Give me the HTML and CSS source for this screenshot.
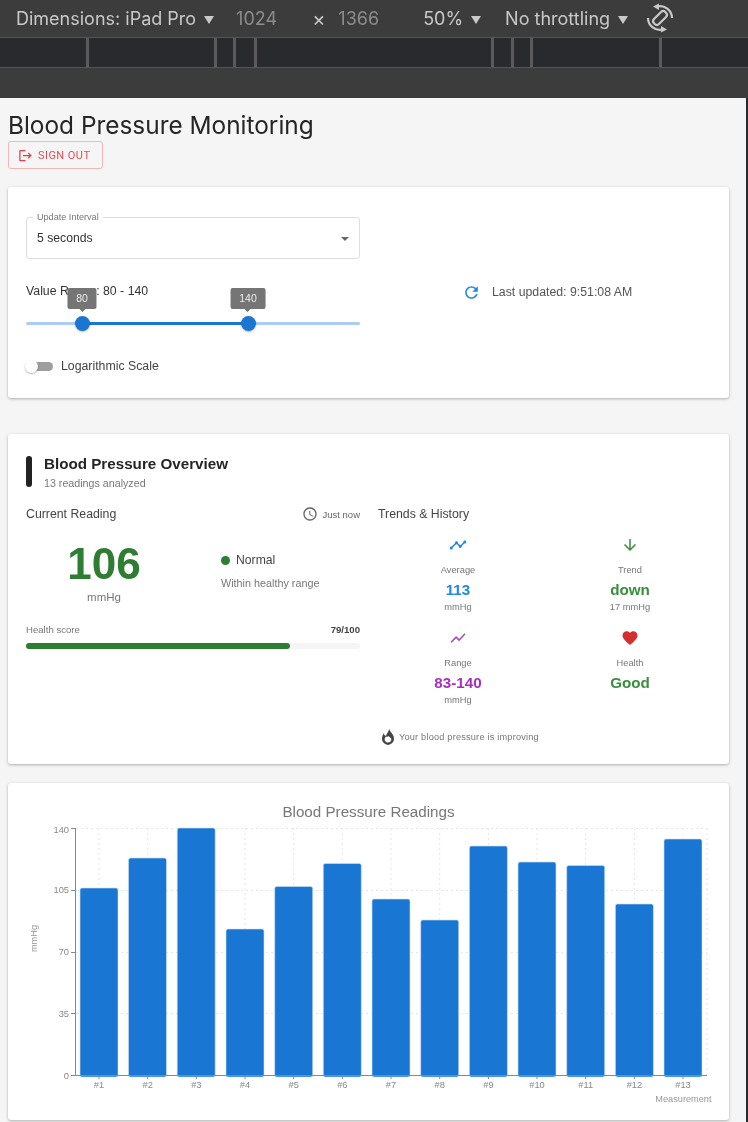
FILE: index.html
```html
<!DOCTYPE html>
<html lang="en">
<head>
    <meta charset="UTF-8">
    <meta name="viewport" content="width=device-width, initial-scale=1.0">
    <title>Blood Pressure Monitoring</title>
    <link rel="stylesheet" href="styles.css">
</head>
<body>
    <!-- device toolbar -->
    <div class="toolbar">
        <span class="tool-item dims">Dimensions: iPad Pro</span><i class="caret"></i>
        <span class="tool-num first-num">1024</span>
        <span class="tool-x">×</span>
        <span class="tool-num">1366</span>
        <span class="tool-item zoom">50%</span><i class="caret"></i>
        <span class="tool-item throttle">No throttling</span><i class="caret"></i>
        <svg class="rotate" viewBox="0 0 30 30">
            <rect x="11.500" y="7" width="7" height="16" rx="3" transform="rotate(45 15 15)"/>
            <path d="M12 3.500A12 12 0 0 1 27 15M18 26.500A12 12 0 0 1 3 15"/>
            <path class="rotate-head" d="M8 3.500L14 .5V7zM22 26.500L16 29.500V23z"/>
        </svg>
    </div>
    <div class="ruler">
        <i class="tick t1"></i><i class="tick t2"></i><i class="tick t3"></i><i class="tick t4"></i>
        <i class="tick t5"></i><i class="tick t6"></i><i class="tick t7"></i><i class="tick t8"></i>
    </div>
    <div class="band"></div>

    <div class="page">
        <h1>Blood Pressure Monitoring</h1>
        <button class="signout" type="button">
            <svg viewBox="0 0 24 24"><path d="M17 7l-1.41 1.41L18.17 11H8v2h10.17l-2.58 2.58L17 17l5-5zM4 5h8V3H4c-1.1 0-2 .9-2 2v14c0 1.1.9 2 2 2h8v-2H4V5z"/></svg>
            SIGN OUT
        </button>

        <!-- controls -->
        <section class="card controls">
            <div class="controls-left">
                <div class="select">
                    <span class="select-label">Update Interval</span>
                    <span>5 seconds</span>
                    <i class="select-caret"></i>
                </div>
                <div class="range">
                    <div class="range-label">Value Range: 80 - 140</div>
                    <div class="slider">
                        <div class="slider-active"></div>
                        <div class="thumb thumb-low"><span class="tip">80</span></div>
                        <div class="thumb thumb-high"><span class="tip">140</span></div>
                    </div>
                </div>
                <div class="log-row">
                    <div class="switch"><i></i></div>
                    <span>Logarithmic Scale</span>
                </div>
            </div>
            <div class="controls-right">
                <svg class="refresh" viewBox="0 0 24 24"><path d="M17.65 6.35C16.2 4.9 14.21 4 12 4c-4.42 0-7.99 3.58-7.99 8s3.57 8 7.99 8c3.73 0 6.84-2.55 7.73-6h-2.08c-.82 2.33-3.04 4-5.65 4-3.31 0-6-2.69-6-6s2.69-6 6-6c1.66 0 3.14.69 4.22 1.78L13 11h7V4l-2.35 2.35z"/></svg>
                <span>Last updated: 9:51:08 AM</span>
            </div>
        </section>

        <!-- overview -->
        <section class="card overview">
            <div class="ov-head">
                <i class="ov-mark"></i>
                <div>
                    <h2>Blood Pressure Overview</h2>
                    <p>13 readings analyzed</p>
                </div>
            </div>
            <div class="ov-cols">
                <div>
                    <div class="col-head">
                        <span>Current Reading</span>
                        <span class="now">
                            <svg viewBox="0 0 24 24"><path d="M11.99 2C6.47 2 2 6.48 2 12s4.47 10 9.99 10C17.52 22 22 17.52 22 12S17.52 2 11.99 2zM12 20c-4.42 0-8-3.58-8-8s3.58-8 8-8 8 3.58 8 8-3.58 8-8 8zm.5-13H11v6l5.25 3.15.75-1.23-4.5-2.67z"/></svg>
                            Just now
                        </span>
                    </div>
                    <div class="current">
                        <div class="current-val">
                            <div class="big">106</div>
                            <div class="big-unit">mmHg</div>
                        </div>
                        <div class="current-state">
                            <div class="state"><i></i>Normal</div>
                            <div class="state-note">Within healthy range</div>
                        </div>
                    </div>
                    <div class="score-row">
                        <span>Health score</span>
                        <b>79/100</b>
                    </div>
                    <div class="score-bar"><div class="score-fill"></div></div>
                </div>
                <div>
                    <div class="col-head">
                        <span>Trends &amp; History</span>
                    </div>
                    <div class="stats">
                        <div class="stat">
                            <svg class="blue" viewBox="0 0 24 24"><path d="M23 8c0 1.1-.9 2-2 2-.18 0-.35-.02-.51-.07l-3.56 3.55c.05.16.07.34.07.52 0 1.1-.9 2-2 2s-2-.9-2-2c0-.18.02-.36.07-.52l-2.55-2.55c-.16.05-.34.07-.52.07s-.36-.02-.52-.07l-4.55 4.56c.05.16.07.33.07.51 0 1.1-.9 2-2 2s-2-.9-2-2 .9-2 2-2c.18 0 .35.02.51.07l4.56-4.55C8.02 9.36 8 9.18 8 9c0-1.1.9-2 2-2s2 .9 2 2c0 .18-.02.36-.07.52l2.55 2.55c.16-.05.34-.07.52-.07s.36.02.52.07l3.55-3.56C19.02 8.35 19 8.18 19 8c0-1.1.9-2 2-2s2 .9 2 2z"/></svg>
                            <div class="stat-label">Average</div>
                            <div class="stat-val blue">113</div>
                            <div class="stat-unit">mmHg</div>
                        </div>
                        <div class="stat">
                            <svg class="green" viewBox="0 0 24 24"><path d="M20 12l-1.41-1.41L13 16.17V4h-2v12.17l-5.58-5.59L4 12l8 8 8-8z"/></svg>
                            <div class="stat-label">Trend</div>
                            <div class="stat-val green">down</div>
                            <div class="stat-unit">17 mmHg</div>
                        </div>
                        <div class="stat">
                            <svg class="purple" viewBox="0 0 24 24"><path d="M3.5 18.49l6-6.01 4 4L22 6.92l-1.41-1.41-7.09 7.97-4-4L2 16.99z"/></svg>
                            <div class="stat-label">Range</div>
                            <div class="stat-val purple">83-140</div>
                            <div class="stat-unit">mmHg</div>
                        </div>
                        <div class="stat">
                            <svg class="red" viewBox="0 0 24 24"><path d="M12 21.35l-1.45-1.32C5.4 15.36 2 12.28 2 8.5 2 5.42 4.42 3 7.5 3c1.74 0 3.41.81 4.5 2.09C13.09 3.81 14.76 3 16.5 3 19.58 3 22 5.42 22 8.5c0 3.78-3.4 6.86-8.55 11.54L12 21.35z"/></svg>
                            <div class="stat-label">Health</div>
                            <div class="stat-val green">Good</div>
                        </div>
                    </div>
                    <div class="improving">
                        <svg viewBox="0 0 24 24"><path fill-rule="evenodd" d="M13.500 1c.5 4 6.500 6.500 6.500 13.500a8 8 0 0 1-16 0c0-3 1-5.500 2.500-7.500.3 2 1.200 3 2.500 3.500 1.500-3 4-6 4.500-9.500zM12 10.500c-.5 1.500-2 1.500-3 1-1 1-1.500 2.200-1.500 3.200a4.500 4.500 0 0 0 9 0c0-1.700-2.500-3-4.500-4.200z"/></svg>
                        Your blood pressure is improving
                    </div>
                </div>
            </div>
        </section>

        <!-- chart -->
        <section class="card chart-card">
            <svg class="chart" width="721" height="337" viewBox="8 783 721 337">
                <text class="chart-title" x="368.500" y="817" text-anchor="middle">Blood Pressure Readings</text>

                <g class="grid">
                    <path d="M76 828.500H707M76 890.500H707M76 952.500H707M76 1013.500H707"/>
                    <path d="M99 828V1076M147.700 828V1076M196.300 828V1076M245 828V1076M293.700 828V1076M342.300 828V1076M391 828V1076M439.700 828V1076M488.400 828V1076M537 828V1076M585.700 828V1076M634.400 828V1076M683 828V1076M707 828V1076"/>
                </g>

                <g class="bars">
                    <rect x="80" y="888" width="38" height="189" rx="2"/>
                    <rect x="128.500" y="858" width="38" height="219" rx="2"/>
                    <rect x="177.200" y="828" width="38" height="249" rx="2"/>
                    <rect x="226" y="929" width="38" height="148" rx="2"/>
                    <rect x="274.700" y="886.500" width="38" height="190.500" rx="2"/>
                    <rect x="323.300" y="863.500" width="38" height="213.500" rx="2"/>
                    <rect x="372" y="899" width="38" height="178" rx="2"/>
                    <rect x="420.700" y="920" width="38" height="157" rx="2"/>
                    <rect x="469.400" y="846" width="38" height="231" rx="2"/>
                    <rect x="518" y="862" width="38" height="215" rx="2"/>
                    <rect x="566.700" y="865.500" width="38" height="211.500" rx="2"/>
                    <rect x="615.400" y="904" width="38" height="173" rx="2"/>
                    <rect x="664" y="839" width="38" height="238" rx="2"/>
                </g>

                <g class="axis">
                    <path d="M75.500 828V1076M71 828.500H76M71 890.500H76M71 952.500H76M71 1013.500H76M71 1075.500H707M99 1076V1079M147.700 1076V1079M196.300 1076V1079M245 1076V1079M293.700 1076V1079M342.300 1076V1079M391 1076V1079M439.700 1076V1079M488.400 1076V1079M537 1076V1079M585.700 1076V1079M634.400 1076V1079M683 1076V1079"/>
                </g>

                <g class="tick-text" text-anchor="end">
                    <text x="69" y="833">140</text>
                    <text x="69" y="893">105</text>
                    <text x="69" y="955">70</text>
                    <text x="69" y="1017">35</text>
                    <text x="69" y="1079">0</text>
                </g>
                <g class="tick-text" text-anchor="middle">
                    <text x="99" y="1088">#1</text>
                    <text x="147.700" y="1088">#2</text>
                    <text x="196.300" y="1088">#3</text>
                    <text x="245" y="1088">#4</text>
                    <text x="293.700" y="1088">#5</text>
                    <text x="342.300" y="1088">#6</text>
                    <text x="391" y="1088">#7</text>
                    <text x="439.700" y="1088">#8</text>
                    <text x="488.400" y="1088">#9</text>
                    <text x="537" y="1088">#10</text>
                    <text x="585.700" y="1088">#11</text>
                    <text x="634.400" y="1088">#12</text>
                    <text x="683" y="1088">#13</text>
                </g>
                <text class="axis-name" x="711.500" y="1102" text-anchor="end">Measurement</text>
                <text class="axis-name" x="37" y="938.500" text-anchor="middle" transform="rotate(-90 37 938.500)">mmHg</text>
            </svg>
        </section>
    </div>
</body>
</html>
```
FILE: styles.css
```css
*{
    margin: 0;
    padding: 0;
    box-sizing: border-box;
}
html, body{
    height: 1122px;
    overflow: hidden;
}
body{
    background: #292a2d;
    font-family: "Liberation Sans", Arial, sans-serif;
    color: #333;
}

/* devtools bars */
.toolbar{
    height: 38px;
    background: #3c3c3c;
    border-bottom: 1px solid #555;
    display: flex;
    align-items: center;
    font-family: Inter, sans-serif;
    font-size: 18px;
    color: #c9c9c9;
    filter: blur(.5px);
}
.tool-item, .tool-num, .tool-x{
    white-space: nowrap;
}
.dims{
    margin-left: 16px;
}
.caret{
    width: 0;
    height: 0;
    margin-left: 8px;
    margin-top: 2px;
    border-left: 5.500px solid transparent;
    border-right: 5.500px solid transparent;
    border-top: 8px solid #c9c9c9;
}
.tool-num{
    color: #8c8c8c;
}
.first-num{
    margin-left: 22px;
}
.tool-x{
    margin: 0 13px 0 35px;
    font-size: 20px;
}
.zoom{
    margin-left: 44px;
}
.throttle{
    margin-left: 24px;
}
.rotate{
    width: 30px;
    height: 30px;
    margin-left: 17px;
    margin-top: -1px;
    fill: none;
    stroke: #c9c9c9;
    stroke-width: 2.2;
}
.rotate-head{
    fill: #c9c9c9;
    stroke: none;
}
.ruler{
    height: 30px;
    background: #292a2d;
    border-bottom: 1px solid #555;
    display: flex;
}
.tick{
    width: 3px;
    background: #5a5a5a;
}
.t1{ margin-left: 86px; }
.t2{ margin-left: 125px; }
.t3{ margin-left: 16px; }
.t4{ margin-left: 18px; }
.t5{ margin-left: 234px; }
.t6{ margin-left: 17px; }
.t7{ margin-left: 16px; }
.t8{ margin-left: 126px; }
.band{
    height: 30px;
    background: #3c3c3c;
}

/* page */
.page{
    width: 746px;
    height: 1024px;
    background: #f5f5f5;
    padding: 12px 17px 0 8px;
    filter: blur(.6px);
}
h1{
    font-family: Inter, sans-serif;
    font-size: 24.400px;
    font-weight: 400;
    line-height: 31px;
    color: #252525;
}
.signout{
    display: flex;
    align-items: center;
    gap: 5px;
    width: 95px;
    height: 28px;
    padding-left: 9px;
    background: none;
    border: 1px solid #f2b8b8;
    border-radius: 3px;
    font-family: Roboto, sans-serif;
    font-size: 11px;
    letter-spacing: .45px;
    color: #e04f5a;
}
.signout svg{
    width: 15px;
    height: 15px;
    fill: #e0404a;
}
.card{
    background: #fff;
    border-radius: 3px;
    box-shadow: 0 1px 3px rgba(0,0,0,.3);
}

/* controls card */
.controls{
    height: 211px;
    margin-top: 18px;
    padding: 30px 18px 0;
    display: grid;
    grid-template-columns: 334px 1fr;
}
.select{
    position: relative;
    height: 42px;
    padding: 0 10px;
    display: flex;
    align-items: center;
    border: 1px solid #ddd;
    border-radius: 3px;
    font-size: 12.200px;
    color: #333;
}
.select-label{
    position: absolute;
    left: 6px;
    top: -6px;
    padding: 0 4px;
    background: #fff;
    font-size: 9.100px;
    line-height: 10px;
    color: #777;
}
.select-caret{
    position: absolute;
    right: 10px;
    top: 19px;
    border-left: 4px solid transparent;
    border-right: 4px solid transparent;
    border-top: 4px solid #666;
}
.range{
    margin-top: 25px;
}
.range-label{
    font-size: 12.300px;
    line-height: 14px;
    color: #333;
}
.slider{
    position: relative;
    height: 3px;
    margin-top: 24px;
    border-radius: 2px;
    background: #a9cdf3;
}
.slider-active{
    position: absolute;
    left: 56px;
    width: 166px;
    height: 3px;
    background: #1976d2;
}
.thumb{
    position: absolute;
    top: -6px;
    width: 15px;
    height: 15px;
    border-radius: 50%;
    background: #1976d2;
    box-shadow: 0 1px 2px rgba(0,0,0,.25);
}
.thumb-low{ left: 48.500px; }
.thumb-high{ left: 214.500px; }
.tip{
    position: absolute;
    left: 50%;
    bottom: 22px;
    transform: translateX(-50%);
    height: 21px;
    padding: 0 8.700px;
    display: block;
    text-align: center;
    line-height: 20px;
    font-size: 10.500px;
    color: #eee;
    background: #757575;
    border-radius: 2px;
}
.tip::after{
    content: "";
    position: absolute;
    left: 50%;
    bottom: -3px;
    margin-left: -3px;
    border-left: 3px solid transparent;
    border-right: 3px solid transparent;
    border-top: 3px solid #757575;
}
.log-row{
    margin-top: 34px;
    display: flex;
    align-items: center;
    gap: 8px;
    font-size: 12.300px;
    color: #444;
}
.switch{
    position: relative;
    width: 26px;
    height: 9px;
    margin-left: 1px;
    border-radius: 5px;
    background: #9e9e9e;
}
.switch i{
    position: absolute;
    left: -2px;
    top: -2px;
    width: 13px;
    height: 13px;
    border-radius: 50%;
    background: #fff;
    box-shadow: 0 1px 2px rgba(0,0,0,.3);
}
.controls-right{
    height: 20px;
    margin-top: 65px;
    padding-left: 102px;
    display: flex;
    align-items: center;
    gap: 11px;
    font-size: 12.300px;
    color: #555;
}
.refresh{
    width: 19px;
    height: 19px;
    fill: #1e88e5;
}

/* overview card */
.overview{
    height: 330px;
    margin-top: 36px;
    padding: 22px 18px 0;
}
.ov-head{
    display: flex;
    gap: 12px;
}
.ov-mark{
    width: 6px;
    height: 31px;
    border-radius: 3px;
    background: #222;
}
h2{
    font-size: 15.200px;
    line-height: 15px;
    color: #252525;
}
.ov-head p{
    margin-top: 6px;
    font-size: 10.700px;
    line-height: 12px;
    color: #777;
}
.ov-cols{
    display: grid;
    grid-template-columns: 334px 334px;
    gap: 18px;
    margin-top: 18px;
}
.col-head{
    display: flex;
    justify-content: space-between;
    align-items: center;
    height: 14px;
    font-size: 12.300px;
    color: #444;
}
.now{
    display: flex;
    align-items: center;
    gap: 5px;
    font-size: 9.500px;
    color: #666;
}
.now svg{
    width: 16px;
    height: 16px;
    fill: #666;
}
.current{
    display: grid;
    grid-template-columns: 156px 1fr;
    column-gap: 39px;
    margin-top: 18px;
}
.current-val{
    text-align: center;
}
.big{
    font-size: 44px;
    font-weight: 700;
    line-height: 50px;
    color: #2e7d32;
}
.big-unit{
    margin-top: 2px;
    font-size: 11.500px;
    color: #777;
}
.state{
    display: flex;
    align-items: center;
    gap: 6px;
    margin-top: 14px;
    font-size: 12.200px;
    color: #444;
}
.state i{
    width: 9px;
    height: 9px;
    border-radius: 50%;
    background: #2e7d32;
}
.state-note{
    margin-top: 10px;
    font-size: 10.800px;
    color: #777;
}
.score-row{
    display: flex;
    justify-content: space-between;
    margin-top: 21px;
    font-size: 9.600px;
    line-height: 11px;
    color: #777;
}
.score-row b{
    color: #444;
}
.score-bar{
    height: 6px;
    margin-top: 8px;
    border-radius: 3px;
    background: #f5f5f5;
}
.score-fill{
    width: 79%;
    height: 6px;
    border-radius: 3px;
    background: #2e7d32;
}
.stats{
    display: grid;
    grid-template-columns: 172px 172px;
    margin: 15px 0 0 -6px;
    row-gap: 9px;
}
.stat{
    height: 84px;
    display: flex;
    flex-direction: column;
    align-items: center;
    text-align: center;
}
.stat svg{
    width: 18px;
    height: 18px;
}
svg.blue{ fill: #1e88e5; }
svg.green{ fill: #388e3c; }
svg.purple{ fill: #ab47bc; }
svg.red{ fill: #d32f2f; }
.stat-label{
    margin-top: 11px;
    font-size: 9.300px;
    line-height: 11px;
    color: #777;
}
.stat-val{
    margin-top: 5px;
    font-size: 15.200px;
    font-weight: 700;
    line-height: 17px;
}
.stat-val.blue{ color: #1e88e5; }
.stat-val.green{ color: #388e3c; }
.stat-val.purple{ color: #a62fc0; }
.stat-unit{
    margin-top: 4px;
    font-size: 9.300px;
    line-height: 11px;
    color: #777;
}
.improving{
    display: flex;
    align-items: center;
    gap: 2px;
    margin-top: 15px;
    padding-left: 1px;
    font-size: 9.200px;
    letter-spacing: .2px;
    color: #777;
}
.improving svg{
    width: 18px;
    height: 18px;
    fill: #444;
}

/* chart card */
.chart-card{
    height: 337px;
    margin-top: 19px;
}
.chart{
    display: block;
}
.chart-title{
    font-size: 15.200px;
    fill: #777;
}
.grid path{
    fill: none;
    stroke: #e6e6e6;
    stroke-dasharray: 2 3;
}
.bars rect{
    fill: #1976d2;
    stroke: #cfe2f7;
    stroke-width: .6;
}
.axis path{
    fill: none;
    stroke: #888;
}
.tick-text text{
    font-size: 9.300px;
    fill: #888;
}
.axis-name{
    font-size: 9.200px;
    fill: #999;
}
```
